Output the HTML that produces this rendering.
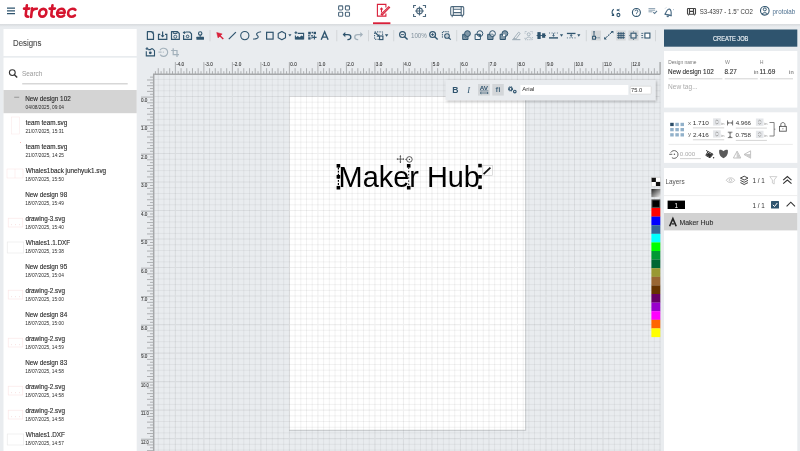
<!DOCTYPE html><html><head><meta charset="utf-8"><style>
*{margin:0;padding:0;box-sizing:border-box}
html,body{width:800px;height:451px;overflow:hidden;background:#e9ecef}
svg{position:absolute;left:0;top:0;will-change:transform}
text{font-family:"Liberation Sans",sans-serif;white-space:pre}
</style></head><body>
<svg width="800" height="451" viewBox="0 0 800 451">
<rect x="0" y="0" width="800" height="451" fill="#e9ecef"/>
<rect x="289.0" y="96.1" width="237.17770000000002" height="334.6819" fill="#c3c6c9"/>
<rect x="289.4" y="96.5" width="235.7777" height="333.2819" fill="#ffffff"/>
<defs><clipPath id="pg"><rect x="289.4" y="96.5" width="235.7777" height="333.2819"/></clipPath><clipPath id="npg"><path d="M0 0H800V451H0Z M289.4 96.5V429.7819H525.1777V96.5Z" clip-rule="evenodd"/></clipPath></defs>
<g clip-path="url(#npg)"><path d="M158.25 75.0V451M163.96 75.0V451M169.66 75.0V451M181.06 75.0V451M186.76 75.0V451M192.47 75.0V451M198.17 75.0V451M209.57 75.0V451M215.27 75.0V451M220.98 75.0V451M226.68 75.0V451M238.08 75.0V451M243.78 75.0V451M249.49 75.0V451M255.19 75.0V451M266.59 75.0V451M272.29 75.0V451M278.00 75.0V451M283.70 75.0V451M295.10 75.0V451M300.80 75.0V451M306.51 75.0V451M312.21 75.0V451M323.61 75.0V451M329.31 75.0V451M335.02 75.0V451M340.72 75.0V451M352.12 75.0V451M357.82 75.0V451M363.53 75.0V451M369.23 75.0V451M380.63 75.0V451M386.33 75.0V451M392.04 75.0V451M397.74 75.0V451M409.14 75.0V451M414.84 75.0V451M420.55 75.0V451M426.25 75.0V451M437.65 75.0V451M443.35 75.0V451M449.06 75.0V451M454.76 75.0V451M466.16 75.0V451M471.86 75.0V451M477.57 75.0V451M483.27 75.0V451M494.67 75.0V451M500.37 75.0V451M506.08 75.0V451M511.78 75.0V451M523.18 75.0V451M528.88 75.0V451M534.59 75.0V451M540.29 75.0V451M551.69 75.0V451M557.39 75.0V451M563.10 75.0V451M568.80 75.0V451M580.20 75.0V451M585.90 75.0V451M591.61 75.0V451M597.31 75.0V451M608.71 75.0V451M614.41 75.0V451M620.12 75.0V451M625.82 75.0V451M637.22 75.0V451M642.92 75.0V451M648.63 75.0V451M654.33 75.0V451M153.6 79.39H660.5M153.6 85.10H660.5M153.6 90.80H660.5M153.6 102.20H660.5M153.6 107.90H660.5M153.6 113.61H660.5M153.6 119.31H660.5M153.6 130.71H660.5M153.6 136.41H660.5M153.6 142.12H660.5M153.6 147.82H660.5M153.6 159.22H660.5M153.6 164.92H660.5M153.6 170.63H660.5M153.6 176.33H660.5M153.6 187.73H660.5M153.6 193.43H660.5M153.6 199.14H660.5M153.6 204.84H660.5M153.6 216.24H660.5M153.6 221.94H660.5M153.6 227.65H660.5M153.6 233.35H660.5M153.6 244.75H660.5M153.6 250.45H660.5M153.6 256.16H660.5M153.6 261.86H660.5M153.6 273.26H660.5M153.6 278.96H660.5M153.6 284.67H660.5M153.6 290.37H660.5M153.6 301.77H660.5M153.6 307.47H660.5M153.6 313.18H660.5M153.6 318.88H660.5M153.6 330.28H660.5M153.6 335.98H660.5M153.6 341.69H660.5M153.6 347.39H660.5M153.6 358.79H660.5M153.6 364.49H660.5M153.6 370.20H660.5M153.6 375.90H660.5M153.6 387.30H660.5M153.6 393.00H660.5M153.6 398.71H660.5M153.6 404.41H660.5M153.6 415.81H660.5M153.6 421.51H660.5M153.6 427.22H660.5M153.6 432.92H660.5M153.6 444.32H660.5M153.6 450.02H660.5" stroke="rgba(0,0,0,0.048)" stroke-width="1" fill="none"/><path d="M175.36 75.0V451M203.87 75.0V451M232.38 75.0V451M260.89 75.0V451M289.40 75.0V451M317.91 75.0V451M346.42 75.0V451M374.93 75.0V451M403.44 75.0V451M431.95 75.0V451M460.46 75.0V451M488.97 75.0V451M517.48 75.0V451M545.99 75.0V451M574.50 75.0V451M603.01 75.0V451M631.52 75.0V451M660.03 75.0V451M153.6 96.50H660.5M153.6 125.01H660.5M153.6 153.52H660.5M153.6 182.03H660.5M153.6 210.54H660.5M153.6 239.05H660.5M153.6 267.56H660.5M153.6 296.07H660.5M153.6 324.58H660.5M153.6 353.09H660.5M153.6 381.60H660.5M153.6 410.11H660.5M153.6 438.62H660.5" stroke="rgba(0,0,0,0.065)" stroke-width="1.1" fill="none"/></g>
<g clip-path="url(#pg)"><path d="M158.25 75.0V451M163.96 75.0V451M169.66 75.0V451M181.06 75.0V451M186.76 75.0V451M192.47 75.0V451M198.17 75.0V451M209.57 75.0V451M215.27 75.0V451M220.98 75.0V451M226.68 75.0V451M238.08 75.0V451M243.78 75.0V451M249.49 75.0V451M255.19 75.0V451M266.59 75.0V451M272.29 75.0V451M278.00 75.0V451M283.70 75.0V451M295.10 75.0V451M300.80 75.0V451M306.51 75.0V451M312.21 75.0V451M323.61 75.0V451M329.31 75.0V451M335.02 75.0V451M340.72 75.0V451M352.12 75.0V451M357.82 75.0V451M363.53 75.0V451M369.23 75.0V451M380.63 75.0V451M386.33 75.0V451M392.04 75.0V451M397.74 75.0V451M409.14 75.0V451M414.84 75.0V451M420.55 75.0V451M426.25 75.0V451M437.65 75.0V451M443.35 75.0V451M449.06 75.0V451M454.76 75.0V451M466.16 75.0V451M471.86 75.0V451M477.57 75.0V451M483.27 75.0V451M494.67 75.0V451M500.37 75.0V451M506.08 75.0V451M511.78 75.0V451M523.18 75.0V451M528.88 75.0V451M534.59 75.0V451M540.29 75.0V451M551.69 75.0V451M557.39 75.0V451M563.10 75.0V451M568.80 75.0V451M580.20 75.0V451M585.90 75.0V451M591.61 75.0V451M597.31 75.0V451M608.71 75.0V451M614.41 75.0V451M620.12 75.0V451M625.82 75.0V451M637.22 75.0V451M642.92 75.0V451M648.63 75.0V451M654.33 75.0V451M153.6 79.39H660.5M153.6 85.10H660.5M153.6 90.80H660.5M153.6 102.20H660.5M153.6 107.90H660.5M153.6 113.61H660.5M153.6 119.31H660.5M153.6 130.71H660.5M153.6 136.41H660.5M153.6 142.12H660.5M153.6 147.82H660.5M153.6 159.22H660.5M153.6 164.92H660.5M153.6 170.63H660.5M153.6 176.33H660.5M153.6 187.73H660.5M153.6 193.43H660.5M153.6 199.14H660.5M153.6 204.84H660.5M153.6 216.24H660.5M153.6 221.94H660.5M153.6 227.65H660.5M153.6 233.35H660.5M153.6 244.75H660.5M153.6 250.45H660.5M153.6 256.16H660.5M153.6 261.86H660.5M153.6 273.26H660.5M153.6 278.96H660.5M153.6 284.67H660.5M153.6 290.37H660.5M153.6 301.77H660.5M153.6 307.47H660.5M153.6 313.18H660.5M153.6 318.88H660.5M153.6 330.28H660.5M153.6 335.98H660.5M153.6 341.69H660.5M153.6 347.39H660.5M153.6 358.79H660.5M153.6 364.49H660.5M153.6 370.20H660.5M153.6 375.90H660.5M153.6 387.30H660.5M153.6 393.00H660.5M153.6 398.71H660.5M153.6 404.41H660.5M153.6 415.81H660.5M153.6 421.51H660.5M153.6 427.22H660.5M153.6 432.92H660.5M153.6 444.32H660.5M153.6 450.02H660.5" stroke="rgba(0,0,0,0.055)" stroke-width="1" fill="none"/><path d="M175.36 75.0V451M203.87 75.0V451M232.38 75.0V451M260.89 75.0V451M289.40 75.0V451M317.91 75.0V451M346.42 75.0V451M374.93 75.0V451M403.44 75.0V451M431.95 75.0V451M460.46 75.0V451M488.97 75.0V451M517.48 75.0V451M545.99 75.0V451M574.50 75.0V451M603.01 75.0V451M631.52 75.0V451M660.03 75.0V451M153.6 96.50H660.5M153.6 125.01H660.5M153.6 153.52H660.5M153.6 182.03H660.5M153.6 210.54H660.5M153.6 239.05H660.5M153.6 267.56H660.5M153.6 296.07H660.5M153.6 324.58H660.5M153.6 353.09H660.5M153.6 381.60H660.5M153.6 410.11H660.5M153.6 438.62H660.5" stroke="rgba(0,0,0,0.062)" stroke-width="1.1" fill="none"/></g>
<rect x="139.6" y="58" width="520.9" height="16.5" fill="#e9ecef"/>
<rect x="139.6" y="58" width="14" height="393" fill="#e9ecef"/>
<path d="M155.40 71.2V74M158.25 68.2V74M161.10 71.2V74M163.96 68.2V74M166.81 71.2V74M169.66 68.2V74M172.51 71.2V74M175.36 62V74M178.21 71.2V74M181.06 68.2V74M183.91 71.2V74M186.76 68.2V74M189.61 71.2V74M192.47 68.2V74M195.32 71.2V74M198.17 68.2V74M201.02 71.2V74M203.87 62V74M206.72 71.2V74M209.57 68.2V74M212.42 71.2V74M215.27 68.2V74M218.12 71.2V74M220.98 68.2V74M223.83 71.2V74M226.68 68.2V74M229.53 71.2V74M232.38 62V74M235.23 71.2V74M238.08 68.2V74M240.93 71.2V74M243.78 68.2V74M246.63 71.2V74M249.49 68.2V74M252.34 71.2V74M255.19 68.2V74M258.04 71.2V74M260.89 62V74M263.74 71.2V74M266.59 68.2V74M269.44 71.2V74M272.29 68.2V74M275.14 71.2V74M278.00 68.2V74M280.85 71.2V74M283.70 68.2V74M286.55 71.2V74M289.40 62V74M292.25 71.2V74M295.10 68.2V74M297.95 71.2V74M300.80 68.2V74M303.65 71.2V74M306.51 68.2V74M309.36 71.2V74M312.21 68.2V74M315.06 71.2V74M317.91 62V74M320.76 71.2V74M323.61 68.2V74M326.46 71.2V74M329.31 68.2V74M332.16 71.2V74M335.02 68.2V74M337.87 71.2V74M340.72 68.2V74M343.57 71.2V74M346.42 62V74M349.27 71.2V74M352.12 68.2V74M354.97 71.2V74M357.82 68.2V74M360.67 71.2V74M363.53 68.2V74M366.38 71.2V74M369.23 68.2V74M372.08 71.2V74M374.93 62V74M377.78 71.2V74M380.63 68.2V74M383.48 71.2V74M386.33 68.2V74M389.18 71.2V74M392.04 68.2V74M394.89 71.2V74M397.74 68.2V74M400.59 71.2V74M403.44 62V74M406.29 71.2V74M409.14 68.2V74M411.99 71.2V74M414.84 68.2V74M417.69 71.2V74M420.55 68.2V74M423.40 71.2V74M426.25 68.2V74M429.10 71.2V74M431.95 62V74M434.80 71.2V74M437.65 68.2V74M440.50 71.2V74M443.35 68.2V74M446.20 71.2V74M449.06 68.2V74M451.91 71.2V74M454.76 68.2V74M457.61 71.2V74M460.46 62V74M463.31 71.2V74M466.16 68.2V74M469.01 71.2V74M471.86 68.2V74M474.71 71.2V74M477.57 68.2V74M480.42 71.2V74M483.27 68.2V74M486.12 71.2V74M488.97 62V74M491.82 71.2V74M494.67 68.2V74M497.52 71.2V74M500.37 68.2V74M503.22 71.2V74M506.08 68.2V74M508.93 71.2V74M511.78 68.2V74M514.63 71.2V74M517.48 62V74M520.33 71.2V74M523.18 68.2V74M526.03 71.2V74M528.88 68.2V74M531.73 71.2V74M534.59 68.2V74M537.44 71.2V74M540.29 68.2V74M543.14 71.2V74M545.99 62V74M548.84 71.2V74M551.69 68.2V74M554.54 71.2V74M557.39 68.2V74M560.25 71.2V74M563.10 68.2V74M565.95 71.2V74M568.80 68.2V74M571.65 71.2V74M574.50 62V74M577.35 71.2V74M580.20 68.2V74M583.05 71.2V74M585.90 68.2V74M588.75 71.2V74M591.61 68.2V74M594.46 71.2V74M597.31 68.2V74M600.16 71.2V74M603.01 62V74M605.86 71.2V74M608.71 68.2V74M611.56 71.2V74M614.41 68.2V74M617.26 71.2V74M620.12 68.2V74M622.97 71.2V74M625.82 68.2V74M628.67 71.2V74M631.52 62V74M634.37 71.2V74M637.22 68.2V74M640.07 71.2V74M642.92 68.2V74M645.77 71.2V74M648.63 68.2V74M651.48 71.2V74M654.33 68.2V74M657.18 71.2V74M660.03 62V74M660.20 62V74M150 77.14H153M147 79.99H153M150 82.84H153M147 85.70H153M150 88.55H153M147 91.40H153M150 94.25H153M141 97.10H153M150 99.95H153M147 102.80H153M150 105.65H153M147 108.50H153M150 111.35H153M147 114.21H153M150 117.06H153M147 119.91H153M150 122.76H153M141 125.61H153M150 128.46H153M147 131.31H153M150 134.16H153M147 137.01H153M150 139.86H153M147 142.72H153M150 145.57H153M147 148.42H153M150 151.27H153M141 154.12H153M150 156.97H153M147 159.82H153M150 162.67H153M147 165.52H153M150 168.38H153M147 171.23H153M150 174.08H153M147 176.93H153M150 179.78H153M141 182.63H153M150 185.48H153M147 188.33H153M150 191.18H153M147 194.03H153M150 196.88H153M147 199.74H153M150 202.59H153M147 205.44H153M150 208.29H153M141 211.14H153M150 213.99H153M147 216.84H153M150 219.69H153M147 222.54H153M150 225.40H153M147 228.25H153M150 231.10H153M147 233.95H153M150 236.80H153M141 239.65H153M150 242.50H153M147 245.35H153M150 248.20H153M147 251.05H153M150 253.91H153M147 256.76H153M150 259.61H153M147 262.46H153M150 265.31H153M141 268.16H153M150 271.01H153M147 273.86H153M150 276.71H153M147 279.56H153M150 282.42H153M147 285.27H153M150 288.12H153M147 290.97H153M150 293.82H153M141 296.67H153M150 299.52H153M147 302.37H153M150 305.22H153M147 308.07H153M150 310.93H153M147 313.78H153M150 316.63H153M147 319.48H153M150 322.33H153M141 325.18H153M150 328.03H153M147 330.88H153M150 333.73H153M147 336.58H153M150 339.44H153M147 342.29H153M150 345.14H153M147 347.99H153M150 350.84H153M141 353.69H153M150 356.54H153M147 359.39H153M150 362.24H153M147 365.09H153M150 367.95H153M147 370.80H153M150 373.65H153M147 376.50H153M150 379.35H153M141 382.20H153M150 385.05H153M147 387.90H153M150 390.75H153M147 393.60H153M150 396.46H153M147 399.31H153M150 402.16H153M147 405.01H153M150 407.86H153M141 410.71H153M150 413.56H153M147 416.41H153M150 419.26H153M147 422.11H153M150 424.97H153M147 427.82H153M150 430.67H153M147 433.52H153M150 436.37H153M141 439.22H153M150 442.07H153M147 444.92H153M150 447.77H153M147 450.62H153" stroke="#a6a8aa" stroke-width="0.9" fill="none"/>
<path d="M153.0 74.3H660.5M153.7 74V451" stroke="#a6a8aa" stroke-width="1.5" fill="none"/>
<text x="176.26" y="65.90" font-size="4.6" fill="#3a3a3a" stroke="#3a3a3a" stroke-width="0.1">-4.0</text>
<text x="204.77" y="65.90" font-size="4.6" fill="#3a3a3a" stroke="#3a3a3a" stroke-width="0.1">-3.0</text>
<text x="233.28" y="65.90" font-size="4.6" fill="#3a3a3a" stroke="#3a3a3a" stroke-width="0.1">-2.0</text>
<text x="261.79" y="65.90" font-size="4.6" fill="#3a3a3a" stroke="#3a3a3a" stroke-width="0.1">-1.0</text>
<text x="290.30" y="65.90" font-size="4.6" fill="#3a3a3a" stroke="#3a3a3a" stroke-width="0.1">0.0</text>
<text x="318.81" y="65.90" font-size="4.6" fill="#3a3a3a" stroke="#3a3a3a" stroke-width="0.1">1.0</text>
<text x="347.32" y="65.90" font-size="4.6" fill="#3a3a3a" stroke="#3a3a3a" stroke-width="0.1">2.0</text>
<text x="375.83" y="65.90" font-size="4.6" fill="#3a3a3a" stroke="#3a3a3a" stroke-width="0.1">3.0</text>
<text x="404.34" y="65.90" font-size="4.6" fill="#3a3a3a" stroke="#3a3a3a" stroke-width="0.1">4.0</text>
<text x="432.85" y="65.90" font-size="4.6" fill="#3a3a3a" stroke="#3a3a3a" stroke-width="0.1">5.0</text>
<text x="461.36" y="65.90" font-size="4.6" fill="#3a3a3a" stroke="#3a3a3a" stroke-width="0.1">6.0</text>
<text x="489.87" y="65.90" font-size="4.6" fill="#3a3a3a" stroke="#3a3a3a" stroke-width="0.1">7.0</text>
<text x="518.38" y="65.90" font-size="4.6" fill="#3a3a3a" stroke="#3a3a3a" stroke-width="0.1">8.0</text>
<text x="546.89" y="65.90" font-size="4.6" fill="#3a3a3a" stroke="#3a3a3a" stroke-width="0.1">9.0</text>
<text x="575.40" y="65.90" font-size="4.6" fill="#3a3a3a" stroke="#3a3a3a" stroke-width="0.1" textLength="7.7" lengthAdjust="spacingAndGlyphs">10.0</text>
<text x="603.91" y="65.90" font-size="4.6" fill="#3a3a3a" stroke="#3a3a3a" stroke-width="0.1" textLength="7.7" lengthAdjust="spacingAndGlyphs">11.0</text>
<text x="632.42" y="65.90" font-size="4.6" fill="#3a3a3a" stroke="#3a3a3a" stroke-width="0.1" textLength="7.7" lengthAdjust="spacingAndGlyphs">12.0</text>
<text x="141.00" y="101.60" font-size="4.6" fill="#3a3a3a" stroke="#3a3a3a" stroke-width="0.1">0.0</text>
<text x="141.00" y="130.11" font-size="4.6" fill="#3a3a3a" stroke="#3a3a3a" stroke-width="0.1">1.0</text>
<text x="141.00" y="158.62" font-size="4.6" fill="#3a3a3a" stroke="#3a3a3a" stroke-width="0.1">2.0</text>
<text x="141.00" y="187.13" font-size="4.6" fill="#3a3a3a" stroke="#3a3a3a" stroke-width="0.1">3.0</text>
<text x="141.00" y="215.64" font-size="4.6" fill="#3a3a3a" stroke="#3a3a3a" stroke-width="0.1">4.0</text>
<text x="141.00" y="244.15" font-size="4.6" fill="#3a3a3a" stroke="#3a3a3a" stroke-width="0.1">5.0</text>
<text x="141.00" y="272.66" font-size="4.6" fill="#3a3a3a" stroke="#3a3a3a" stroke-width="0.1">6.0</text>
<text x="141.00" y="301.17" font-size="4.6" fill="#3a3a3a" stroke="#3a3a3a" stroke-width="0.1">7.0</text>
<text x="141.00" y="329.68" font-size="4.6" fill="#3a3a3a" stroke="#3a3a3a" stroke-width="0.1">8.0</text>
<text x="141.00" y="358.19" font-size="4.6" fill="#3a3a3a" stroke="#3a3a3a" stroke-width="0.1">9.0</text>
<text x="141.00" y="386.70" font-size="4.6" fill="#3a3a3a" stroke="#3a3a3a" stroke-width="0.1" textLength="7.7" lengthAdjust="spacingAndGlyphs">10.0</text>
<text x="141.00" y="415.21" font-size="4.6" fill="#3a3a3a" stroke="#3a3a3a" stroke-width="0.1" textLength="7.7" lengthAdjust="spacingAndGlyphs">11.0</text>
<text x="141.00" y="443.72" font-size="4.6" fill="#3a3a3a" stroke="#3a3a3a" stroke-width="0.1" textLength="7.7" lengthAdjust="spacingAndGlyphs">12.0</text>
<rect x="0" y="0" width="800" height="24.1" fill="#fff"/>
<defs><linearGradient id="hs" x1="0" y1="0" x2="0" y2="1"><stop offset="0" stop-color="#d6d9dc"/><stop offset="1" stop-color="#e9ecef"/></linearGradient></defs>
<rect x="0" y="24.1" width="800" height="2.8" fill="url(#hs)"/>
<path d="M7 8.2H15M7 10.9H15M7 13.7H15" stroke="#2f546e" stroke-width="1.3"/>
<g transform="translate(0,17) skewX(-6.5) translate(0,-17)" stroke="#d5142e" stroke-width="2.6" stroke-linecap="round"><path d="M25.5 5.2V14.6C25.5 16.3 26.400000000000002 16.7 28.200000000000003 16.7" fill="none"/><path d="M23.1 8.6H28.3"/><path d="M31.1 8.4V16.9M31.1 12.6C31.3 9.8 33.1 8.6 35.9 8.7" fill="none"/><ellipse cx="42.3" cy="12.75" rx="3.55" ry="3.9" fill="none"/><path d="M51.1 5.2V14.6C51.1 16.3 52.0 16.7 53.800000000000004 16.7" fill="none"/><path d="M48.7 8.6H53.900000000000006"/><g transform="translate(-0.7,0)"><path d="M64.9 12.7H57.6M64.9 12.7C64.9 10.4 63.2 8.8 61.2 8.8C59 8.8 57.4 10.6 57.4 12.75C57.4 14.9 59 16.7 61.4 16.7C62.6 16.7 63.7 16.3 64.6 15.5" fill="none"/></g><g transform="translate(-1,0)"><path d="M75.6 9.9C74.9 9.2 73.8 8.8 72.6 8.8C70.4 8.8 68.6 10.6 68.6 12.75C68.6 14.9 70.4 16.7 72.6 16.7C73.8 16.7 74.9 16.3 75.7 15.5" fill="none"/></g></g>
<g fill="none" stroke="#4d687d" stroke-width="1.1"><rect x="338.6" y="5.9" width="4.1" height="4.1" rx="0.9"/><rect x="345.4" y="5.9" width="4.1" height="4.1" rx="0.9"/><rect x="338.6" y="12.2" width="4.1" height="4.1" rx="0.9"/><rect x="345.4" y="12.2" width="4.1" height="4.1" rx="0.9"/></g>
<g fill="none" stroke="#d9203a" stroke-width="1.1"><path d="M385.9 7.5V4.4H377.4V16.1H385.9V13.5"/><path d="M381.2 14.2L388.7 6.7L389.6 7.6L382.1 15.1Z"/><path d="M381.5 8V12.5M380.2 9.5L381.5 8L382.8 9.5" /></g>
<rect x="373" y="22.3" width="17.4" height="1.85" fill="#d9203a"/>
<g fill="none" stroke="#4d687d" stroke-width="1.1"><path d="M413.6 8V5.5H416M422.8 5.5H425.5V8M425.5 14V16.5H422.8M416 16.5H413.6V14"/><circle cx="419.5" cy="11" r="2.9"/><path d="M419.5 6.6V15.4M415.1 11H423.9"/></g>
<g fill="none" stroke="#4d687d" stroke-width="1.1"><rect x="450.7" y="6.6" width="13" height="8.8" rx="1.2"/><path d="M453.3 6.6V15.4M461.2 6.6V15.4M453.3 9.3H461.2M453.3 12.6H461.2M452.2 15.6V17.2M462.2 15.6V17.2"/></g>
<g fill="none" stroke="#2f546e" stroke-width="1.1"><path d="M613.8 9.3C611.6 10.6 611.6 13.2 613.1 14.8"/><path d="M611.8 15.4L613.6 15.5L613.5 13.7" /></g>
<path d="M617.3 9.2V11M617.5 10.1L619.6 9.2M617.5 10.1L619.6 11" stroke="#2f546e" stroke-width="0.9" fill="none"/>
<ellipse cx="618.4" cy="15" rx="1.5" ry="1.6" fill="none" stroke="#2f546e" stroke-width="1.1"/>
<circle cx="636.4" cy="12.5" r="4" fill="none" stroke="#2f546e" stroke-width="1.1"/>
<path d="M635 11.2C635 9.6 637.9 9.6 637.9 11.2C637.9 12.3 636.5 12.4 636.5 13.6V14.1M636.5 15.3V15.6" stroke="#2f546e" stroke-width="0.9" fill="none"/>
<path d="M648.5 8.6H655.2M648.5 10.2H655.2M648.5 11.8H652.5" stroke="#8da2b2" stroke-width="1"/>
<path d="M653.3 12.2L654.6 13.5L657 10.8" stroke="#5d7a90" stroke-width="1.1" fill="none"/>
<g transform="rotate(13 668.8 12)" fill="none" stroke="#4a6b84" stroke-width="1.15" stroke-linejoin="round"><path d="M665.8 15C666.2 12.4 666.2 9.6 668.8 8.9C671.4 9.6 671.4 12.4 671.8 15Z"/><path d="M665.2 15H672.4"/><path d="M667.9 16.3C668.2 16.9 669.4 16.9 669.7 16.3"/></g><path d="M673 9.2L673.9 10M665.3 8.4L666.1 7.6" stroke="#7d96a8" stroke-width="0.7"/>
<g fill="none" stroke="#444" stroke-width="1.1"><rect x="687.5" y="8.5" width="8" height="5.8" rx="0.6"/><path d="M689.5 8.5V14.3M693.5 8.5V14.3M689.5 11.4H693.5"/></g><path d="M688.5 14.8V15.5M694.5 14.8V15.5" stroke="#444" stroke-width="0.9"/>
<text x="699.70" y="14.10" font-size="7.1" fill="#3a3a3a" textLength="53.20" lengthAdjust="spacingAndGlyphs" >S3-4397 - 1.5&quot; CO2</text>
<circle cx="764.8" cy="10.8" r="4.3" fill="none" stroke="#2f546e" stroke-width="1.1"/><circle cx="764.8" cy="9.4" r="1.5" fill="none" stroke="#2f546e" stroke-width="1"/><path d="M762.2 14.1C762.5 12.2 767.1 12.2 767.4 14.1" fill="none" stroke="#2f546e" stroke-width="1"/>
<text x="772.62" y="13.80" font-size="7" fill="#4e7190" textLength="22.58" lengthAdjust="spacingAndGlyphs" >protolab</text>
<rect x="3.5" y="29" width="133.2" height="27" fill="#fff"/>
<text x="13.07" y="46.40" font-size="8.4" fill="#4a4a4a" textLength="28.26" lengthAdjust="spacingAndGlyphs" stroke="#4a4a4a" stroke-width="0.1">Designs</text>
<rect x="3.5" y="57.7" width="133.2" height="393.3" fill="#fff"/>
<circle cx="12.3" cy="72.6" r="2.9" fill="none" stroke="#333" stroke-width="1.1"/><path d="M14.4 74.7L17.2 77.5" stroke="#333" stroke-width="1.4"/>
<text x="21.88" y="76.30" font-size="7" fill="#999" textLength="20.57" lengthAdjust="spacingAndGlyphs" >Search</text>
<rect x="22.2" y="83.4" width="105.5" height="0.9" fill="#bdbdbd"/>
<rect x="3.5" y="90" width="133.2" height="23.2" fill="#d4d4d4"/>
<rect x="14.2" y="96.8" width="5" height="0.8" fill="#888"/>
<text x="25.19" y="101.10" font-size="7.4" fill="#2b2b2b" textLength="45.53" lengthAdjust="spacingAndGlyphs" stroke="#2b2b2b" stroke-width="0.14">New design 102</text>
<text x="25.51" y="109.10" font-size="5.6" fill="#2a2a2a" textLength="38.50" lengthAdjust="spacingAndGlyphs" >04/08/2025, 09:04</text>
<text x="25.64" y="125.10" font-size="7.4" fill="#2b2b2b" textLength="41.64" lengthAdjust="spacingAndGlyphs" stroke="#2b2b2b" stroke-width="0.14">team team.svg</text>
<text x="25.46" y="133.10" font-size="5.6" fill="#2a2a2a" textLength="38.50" lengthAdjust="spacingAndGlyphs" >21/07/2025, 15:31</text>
<rect x="11.5" y="117" width="8" height="17" fill="none" stroke="#f9e6e6" stroke-width="0.5"/>
<text x="25.64" y="149.10" font-size="7.4" fill="#2b2b2b" textLength="41.64" lengthAdjust="spacingAndGlyphs" stroke="#2b2b2b" stroke-width="0.14">team team.svg</text>
<text x="25.46" y="157.10" font-size="5.6" fill="#2a2a2a" textLength="38.50" lengthAdjust="spacingAndGlyphs" >21/07/2025, 14:25</text>
<rect x="20" y="142" width="1" height="1" fill="#f2b8b8"/>
<text x="25.70" y="173.10" font-size="7.4" fill="#2b2b2b" textLength="80.47" lengthAdjust="spacingAndGlyphs" stroke="#2b2b2b" stroke-width="0.14">Whales1back junehyuk1.svg</text>
<text x="25.32" y="181.10" font-size="5.6" fill="#2a2a2a" textLength="38.50" lengthAdjust="spacingAndGlyphs" >18/07/2025, 15:50</text>
<rect x="7" y="169" width="16" height="9" fill="none" stroke="#f9e2e2" stroke-width="0.5"/><path d="M15 169V178" stroke="#f9e2e2" stroke-width="0.5"/>
<text x="25.19" y="197.10" font-size="7.4" fill="#2b2b2b" textLength="42.00" lengthAdjust="spacingAndGlyphs" stroke="#2b2b2b" stroke-width="0.14">New design 98</text>
<text x="25.32" y="205.10" font-size="5.6" fill="#2a2a2a" textLength="38.50" lengthAdjust="spacingAndGlyphs" >18/07/2025, 15:49</text>
<text x="25.45" y="221.10" font-size="7.4" fill="#2b2b2b" textLength="39.52" lengthAdjust="spacingAndGlyphs" stroke="#2b2b2b" stroke-width="0.14">drawing-3.svg</text>
<text x="25.32" y="229.10" font-size="5.6" fill="#2a2a2a" textLength="38.50" lengthAdjust="spacingAndGlyphs" >18/07/2025, 15:40</text>
<rect x="8.2" y="218.2" width="14.6" height="8.8" fill="none" stroke="#fae3e3" stroke-width="0.6"/><path d="M11 224.6H12M15 224.6H16M19 224.6H20" stroke="#f0c8c8" stroke-width="0.5"/>
<text x="25.70" y="245.10" font-size="7.4" fill="#2b2b2b" textLength="44.46" lengthAdjust="spacingAndGlyphs" stroke="#2b2b2b" stroke-width="0.14">Whales1.1.DXF</text>
<text x="25.32" y="253.10" font-size="5.6" fill="#2a2a2a" textLength="38.50" lengthAdjust="spacingAndGlyphs" >18/07/2025, 15:38</text>
<rect x="7.2" y="242" width="16.5" height="11" fill="none" stroke="#e6e6e6" stroke-width="0.6"/>
<text x="25.19" y="269.10" font-size="7.4" fill="#2b2b2b" textLength="42.00" lengthAdjust="spacingAndGlyphs" stroke="#2b2b2b" stroke-width="0.14">New design 95</text>
<text x="25.32" y="277.10" font-size="5.6" fill="#2a2a2a" textLength="38.50" lengthAdjust="spacingAndGlyphs" >18/07/2025, 15:04</text>
<text x="25.45" y="293.10" font-size="7.4" fill="#2b2b2b" textLength="39.52" lengthAdjust="spacingAndGlyphs" stroke="#2b2b2b" stroke-width="0.14">drawing-2.svg</text>
<text x="25.32" y="301.10" font-size="5.6" fill="#2a2a2a" textLength="38.50" lengthAdjust="spacingAndGlyphs" >18/07/2025, 15:00</text>
<rect x="8.2" y="290.2" width="14.6" height="8.8" fill="none" stroke="#fae3e3" stroke-width="0.6"/><path d="M11 296.6H12M15 296.6H16M19 296.6H20" stroke="#f0c8c8" stroke-width="0.5"/>
<text x="25.19" y="317.10" font-size="7.4" fill="#2b2b2b" textLength="42.00" lengthAdjust="spacingAndGlyphs" stroke="#2b2b2b" stroke-width="0.14">New design 84</text>
<text x="25.32" y="325.10" font-size="5.6" fill="#2a2a2a" textLength="38.50" lengthAdjust="spacingAndGlyphs" >18/07/2025, 15:00</text>
<text x="25.45" y="341.10" font-size="7.4" fill="#2b2b2b" textLength="39.52" lengthAdjust="spacingAndGlyphs" stroke="#2b2b2b" stroke-width="0.14">drawing-2.svg</text>
<text x="25.32" y="349.10" font-size="5.6" fill="#2a2a2a" textLength="38.50" lengthAdjust="spacingAndGlyphs" >18/07/2025, 14:59</text>
<rect x="8.2" y="338.2" width="14.6" height="8.8" fill="none" stroke="#fae3e3" stroke-width="0.6"/><path d="M11 344.6H12M15 344.6H16M19 344.6H20" stroke="#f0c8c8" stroke-width="0.5"/>
<text x="25.19" y="365.10" font-size="7.4" fill="#2b2b2b" textLength="42.00" lengthAdjust="spacingAndGlyphs" stroke="#2b2b2b" stroke-width="0.14">New design 83</text>
<text x="25.32" y="373.10" font-size="5.6" fill="#2a2a2a" textLength="38.50" lengthAdjust="spacingAndGlyphs" >18/07/2025, 14:58</text>
<text x="25.45" y="389.10" font-size="7.4" fill="#2b2b2b" textLength="39.52" lengthAdjust="spacingAndGlyphs" stroke="#2b2b2b" stroke-width="0.14">drawing-2.svg</text>
<text x="25.32" y="397.10" font-size="5.6" fill="#2a2a2a" textLength="38.50" lengthAdjust="spacingAndGlyphs" >18/07/2025, 14:58</text>
<rect x="8.2" y="386.2" width="14.6" height="8.8" fill="none" stroke="#fae3e3" stroke-width="0.6"/><path d="M11 392.6H12M15 392.6H16M19 392.6H20" stroke="#f0c8c8" stroke-width="0.5"/>
<text x="25.45" y="413.10" font-size="7.4" fill="#2b2b2b" textLength="39.52" lengthAdjust="spacingAndGlyphs" stroke="#2b2b2b" stroke-width="0.14">drawing-2.svg</text>
<text x="25.32" y="421.10" font-size="5.6" fill="#2a2a2a" textLength="38.50" lengthAdjust="spacingAndGlyphs" >18/07/2025, 14:58</text>
<rect x="8.2" y="410.2" width="14.6" height="8.8" fill="none" stroke="#fae3e3" stroke-width="0.6"/><path d="M11 416.6H12M15 416.6H16M19 416.6H20" stroke="#f0c8c8" stroke-width="0.5"/>
<text x="25.70" y="437.10" font-size="7.4" fill="#2b2b2b" textLength="39.17" lengthAdjust="spacingAndGlyphs" stroke="#2b2b2b" stroke-width="0.14">Whales1.DXF</text>
<text x="25.32" y="445.10" font-size="5.6" fill="#2a2a2a" textLength="38.50" lengthAdjust="spacingAndGlyphs" >18/07/2025, 14:57</text>
<rect x="7.2" y="434" width="16.5" height="11" fill="none" stroke="#e6e6e6" stroke-width="0.6"/>
<rect x="209.5" y="30" width="1" height="11.3" fill="#d3d6d9"/>
<rect x="336.3" y="30" width="1" height="11.3" fill="#d3d6d9"/>
<rect x="368.0" y="30" width="1" height="11.3" fill="#d3d6d9"/>
<rect x="393.2" y="30" width="1" height="11.3" fill="#d3d6d9"/>
<rect x="456.2" y="30" width="1" height="11.3" fill="#d3d6d9"/>
<rect x="585.8" y="30" width="1" height="11.3" fill="#d3d6d9"/>
<rect x="655.0" y="30" width="1" height="11.3" fill="#d3d6d9"/>
<path d="M147.4 31.7H151.4L153.5 33.8V39.4H147.4Z" fill="none" stroke="#2f546e" stroke-width="1.2" stroke-linejoin="round"/><path d="M151.2 31.6L153.6 34V31.6Z" fill="#2f546e"/><path d="M160.3 34.4H158.5V39.4H166.8V34.4H165" fill="none" stroke="#2f546e" stroke-width="1.2"/><path d="M162.6 31.6V37" stroke="#2f546e" stroke-width="1.2"/><path d="M160.6 35.2L162.6 37.6L164.6 35.2Z" fill="#2f546e"/><path d="M171.5 31.7H177.5L179.3 33.5V39.4H171.5Z" fill="none" stroke="#2f546e" stroke-width="1.2" stroke-linejoin="round"/><path d="M173.3 31.8V33.5H177.1V31.8" fill="none" stroke="#2f546e" stroke-width="0.9"/><circle cx="175.3" cy="36.7" r="1.5" fill="none" stroke="#2f546e" stroke-width="0.9"/><path d="M185.5 32H189.7L191.5 33.8V39.4H183.6V35" fill="none" stroke="#2f546e" stroke-width="1.2" stroke-linejoin="round"/><circle cx="187.6" cy="36.4" r="1.3" fill="none" stroke="#2f546e" stroke-width="1"/><path d="M184.3 31.2V34M182.9 32.6H185.7" stroke="#2f546e" stroke-width="1"/><circle cx="200.2" cy="33.4" r="1.7" fill="none" stroke="#2f546e" stroke-width="1.1"/><path d="M200.2 35.2V36.8" stroke="#2f546e" stroke-width="1.2"/><rect x="196.4" y="36.7" width="7.6" height="3.1" rx="0.5" fill="#2f546e"/><path d="M216.7 32.5L222.2 33.9L218.1 38Z" fill="#d9203a" stroke="#d9203a" stroke-width="0.5" stroke-linejoin="round"/><path d="M219.6 35.4L223.3 38.9" stroke="#d9203a" stroke-width="1.4"/><path d="M228.8 39.1L235.9 32.1" stroke="#2f546e" stroke-width="1.2"/><circle cx="244.8" cy="35.6" r="4.1" fill="none" stroke="#2f546e" stroke-width="1.1"/><path d="M253.2 39.1C256 39 258.4 38.2 258.2 36.8C258 35.6 256 35.3 256.8 33.6C257.4 32.4 259.5 31.9 261.1 31.7" fill="none" stroke="#2f546e" stroke-width="1.1"/><rect x="266.6" y="32.3" width="6.5" height="6.8" fill="none" stroke="#2f546e" stroke-width="1.2"/><path d="M281.85 31.6L285.5 33.6V37.8L281.85 39.8L278.2 37.8V33.6Z" fill="none" stroke="#2f546e" stroke-width="1.1" stroke-linejoin="round"/><path d="M288.3 34.2H291.5L289.9 36.6Z" fill="#2f546e"/><path d="M297.7 33.4H303.6V39H295.4V35.6" fill="none" stroke="#2f546e" stroke-width="1.1"/><path d="M295.6 37.4L297.8 36.1L299.4 37.3L301.6 35.4L303.6 36.8V39.2H295.6Z" fill="#2f546e"/><path d="M295.9 31.3V34.1M294.5 32.7H297.3" stroke="#2f546e" stroke-width="1"/><g fill="#2f546e"><rect x="308.2" y="31.8" width="2.6" height="2.6"/><rect x="311.6" y="31.8" width="1.5" height="1.5"/><rect x="313.6" y="31.8" width="2.4" height="2.4"/><rect x="308.2" y="35" width="1.5" height="1.5"/><rect x="310.8" y="35.2" width="2.2" height="1.2"/><rect x="308.2" y="37.2" width="2.4" height="2.4"/><rect x="311.2" y="37.4" width="1.2" height="1.2"/></g><path d="M314.4 35.2V39.6M312.2 37.4H316.6" stroke="#2f546e" stroke-width="1.1"/><path d="M321.2 39.8L324.65 31.8L328.1 39.8M322.4 37.1H326.9" fill="none" stroke="#2f546e" stroke-width="1.4"/><path d="M343.8 34.6H348C351.8 34.6 351.8 39.6 348 39.6H347.4" fill="none" stroke="#2f546e" stroke-width="1.3"/><path d="M342.6 34.6L345.3 31.9V37.3Z" fill="#2f546e"/><path d="M361.8 34.6H357.6C353.8 34.6 353.8 39.6 357.6 39.6H358.2" fill="none" stroke="#a3b1bb" stroke-width="1.3"/><path d="M363 34.6L360.3 31.9V37.3Z" fill="#a3b1bb"/><path d="M374.6 31.9H382.6V39.3H374.6Z" fill="none" stroke="#2f546e" stroke-width="1" stroke-dasharray="1.3 1.1"/><path d="M375.2 32.5L378.4 35.7" stroke="#2f546e" stroke-width="1.2"/><path d="M379.4 36.7V33.8L376.5 36.7Z" fill="#2f546e"/><rect x="379.6" y="36" width="3.3" height="3.6" fill="#e9ecef" stroke="#2f546e" stroke-width="1.1"/><path d="M384.9 34.2H388.3L386.6 36.7Z" fill="#2f546e"/><circle cx="402.5" cy="34.6" r="2.9" fill="none" stroke="#2f546e" stroke-width="1.2"/><path d="M404.6 36.7L407.6 39.5" stroke="#2f546e" stroke-width="1.4"/><path d="M401 34.6H404" stroke="#2f546e" stroke-width="0.9"/><circle cx="432.6" cy="34.6" r="2.9" fill="none" stroke="#2f546e" stroke-width="1.2"/><path d="M434.7 36.7L437.7 39.5" stroke="#2f546e" stroke-width="1.4"/><path d="M431.1 34.6H434.1M432.6 33.1V36.1" stroke="#2f546e" stroke-width="0.9"/><path d="M442.4 37.6V31.7H448.6V33.2" fill="none" stroke="#2f546e" stroke-width="1" stroke-dasharray="1.3 0.9"/><circle cx="447" cy="36" r="2.3" fill="none" stroke="#2f546e" stroke-width="1.1"/><path d="M448.6 37.6L450.8 39.6" stroke="#2f546e" stroke-width="1.2"/><circle cx="447" cy="36" r="0.5" fill="#2f546e"/><path d="M462.7 34.3H468V39.5H462.7Z" fill="#8198a8" stroke="#2f546e" stroke-width="1"/><circle cx="467.5" cy="33.6" r="2.9" fill="#8198a8" stroke="#2f546e" stroke-width="1"/><path d="M463.3 34.8L466.6 38.4" stroke="#2f546e" stroke-width="0.6"/><path d="M475.09999999999997 34.3H480.4V39.5H475.09999999999997Z" fill="#f2f4f6" stroke="#2f546e" stroke-width="1"/><circle cx="479.9" cy="33.6" r="2.9" fill="none" stroke="#2f546e" stroke-width="1"/><path d="M477.2 34.4H480.29999999999995V36.4Z" fill="#2f546e"/><path d="M487.7 34.3H493V39.5H487.7Z" fill="#8198a8" stroke="#2f546e" stroke-width="1"/><circle cx="492.5" cy="33.6" r="2.9" fill="none" stroke="#2f546e" stroke-width="1"/><path d="M489.9 34.5H492.8V36.3Z" fill="#eef1f3"/><path d="M500.09999999999997 34.3H505.4V39.5H500.09999999999997Z" fill="#8198a8" stroke="#2f546e" stroke-width="1"/><circle cx="504.9" cy="33.6" r="2.9" fill="#8198a8" stroke="#2f546e" stroke-width="1"/><circle cx="504.0" cy="35.4" r="1.1" fill="#fff"/><path d="M512.2 39.6H520.4" stroke="#a3b1bb" stroke-width="1.2"/><path d="M513.4 38.8L518.6 32.2L520.2 33.4L515.6 39.4Z" fill="none" stroke="#a3b1bb" stroke-width="1"/><path d="M513.2 39.2L516.5 39.2L514.4 37.2Z" fill="#a3b1bb"/><g fill="none" stroke="#a3b1bb" stroke-width="0.9"><path d="M525 33.6V31.5H527M530.5 31.5H532.4V33.6M532.4 37V39.7H525V37" stroke-dasharray="1 0.8"/><circle cx="528.7" cy="34.3" r="1.5"/><path d="M526.2 38.8C526.4 36.6 531 36.6 531.2 38.8"/></g><rect x="537.4" y="32.1" width="3.3" height="6.9" fill="#2f546e"/><rect x="542.1" y="33.3" width="3.1" height="4.5" fill="#2f546e"/><path d="M536.6 35.5H546" stroke="#2f546e" stroke-width="0.9"/><rect x="549" y="37.2" width="9" height="1.4" fill="#2f546e"/><path d="M549 33H550M551.6 33H552.6M554.3 33H555.3M556.9 33H557.9" stroke="#2f546e" stroke-width="0.8"/><path d="M553.5 33.2V35.5" stroke="#2f546e" stroke-width="0.8"/><path d="M552 35.2H555L553.5 36.8Z" fill="#2f546e"/><path d="M559.9 34.2H563.1L561.5 36.7Z" fill="#2f546e"/><rect x="566.9" y="32.8" width="8.6" height="1.3" fill="#2f546e"/><path d="M566.9 37.9H567.9M569.4 37.9H570.4M572 37.9H573M574.5 37.9H575.5" stroke="#2f546e" stroke-width="0.8"/><path d="M571.2 35.5V37.6" stroke="#2f546e" stroke-width="0.8"/><path d="M569.7 35.7H572.7L571.2 34.1Z" fill="#2f546e"/><path d="M577.2 34.2H580.4L578.8 36.7Z" fill="#2f546e"/><rect x="591.2" y="30.6" width="9.8" height="9.9" fill="#d6d8da"/><path d="M594 31.6V36.2" stroke="#2f546e" stroke-width="0.9"/><rect x="592.6" y="36.3" width="2.9" height="2.9" fill="none" stroke="#2f546e" stroke-width="1"/><path d="M596.3 37.8H597.3M598.5 37.8H599.5" stroke="#2f546e" stroke-width="0.9"/><rect x="593.4" y="31.2" width="1.3" height="1" fill="#2f546e"/><path d="M604.6 39L607.6 36M609.6 34.2L612.4 31.6" stroke="#2f546e" stroke-width="1"/><path d="M604.2 36.8V39.4H606.8Z M610.8 31H613.4V33.6Z" fill="#2f546e"/><rect x="608" y="34.6" width="1.2" height="1.2" fill="#2f546e"/><rect x="616.2" y="30.5" width="9.5" height="10" fill="#d6d8da"/><path d="M618.8 32V39M621 32V39M623.2 32V39M617.2 33.6H624.8M617.2 35.6H624.8M617.2 37.6H624.8" stroke="#2f546e" stroke-width="0.9"/><rect x="628.4" y="30.5" width="10.2" height="10" fill="#d6d8da"/><rect x="631" y="33.2" width="5" height="4.8" fill="#e3e5e7" stroke="#2f546e" stroke-width="1.1"/><path d="M633.5 31.2L632.7 32.2H634.3Z M633.5 39.9L632.7 38.9H634.3Z M629.2 35.6L630.2 34.8V36.4Z M637.8 35.6L636.8 34.8V36.4Z" fill="#2f546e"/><rect x="644.9" y="33.1" width="5" height="4.9" fill="#fff" stroke="#2f546e" stroke-width="1.1"/><path d="M641.3 33.4H643.3M641.3 35.5H643M641.3 37.7H643.3" stroke="#2f546e" stroke-width="0.8"/><path d="M148.2 49.6H150.6L151.3 48.8H152.6L154.5 50.7V55.9H146.3V51.2" fill="none" stroke="#2f546e" stroke-width="1.1"/><circle cx="150.3" cy="52.8" r="1.4" fill="#2f546e"/><path d="M147 47.3V50.1M145.6 48.7H148.4" stroke="#2f546e" stroke-width="1.1"/><path d="M160 50.3A4.1 4.1 0 1 1 160.2 54.6" fill="none" stroke="#a3b1bb" stroke-width="1.1"/><path d="M158.4 52.1H161.6" stroke="#a3b1bb" stroke-width="1"/><circle cx="163.3" cy="52.1" r="0.6" fill="#a3b1bb"/><path d="M173.2 48.3V54.6H179M171.1 50.5H177V56.9" fill="none" stroke="#a3b1bb" stroke-width="1.2"/>
<text x="410.90" y="38.30" font-size="6.4" fill="#7f8f9b" textLength="16.04" lengthAdjust="spacingAndGlyphs" >100%</text>
<defs><filter id="sh" x="-10%" y="-60%" width="120%" height="230%"><feDropShadow dx="0.8" dy="1" stdDeviation="1.8" flood-color="#000" flood-opacity="0.32"/></filter></defs>
<rect x="445.6" y="80" width="210" height="20.2" fill="#e9ecef" filter="url(#sh)"/>
<rect x="478" y="84" width="11.8" height="11.6" fill="#d3d6d9"/><rect x="492.3" y="84" width="11.5" height="11.6" fill="#d3d6d9"/>
<text x="452.3" y="93.1" font-size="8.6" font-weight="bold" fill="#2f546e" font-family="Liberation Sans">B</text>
<text x="467.2" y="93.1" font-size="8.4" font-style="italic" fill="#2f546e" style="font-family:'Liberation Serif'">I</text>
<text x="479.7" y="90.2" font-size="5.6" font-weight="bold" fill="#2f546e" textLength="8.3" lengthAdjust="spacingAndGlyphs">AV</text><path d="M479.8 90.9H488.4" stroke="#2f546e" stroke-width="0.6"/><path d="M480.2 93H488.2M480.2 93L481.4 92.2M480.2 93L481.4 93.8M488.2 93L487 92.2M488.2 93L487 93.8" stroke="#2f546e" stroke-width="0.7" fill="none"/>
<text x="495.5" y="92" font-size="6.5" fill="#2f546e" textLength="5" lengthAdjust="spacingAndGlyphs">fi</text>
<circle cx="510.5" cy="88.9" r="1.9" fill="none" stroke="#2f546e" stroke-width="1.4" stroke-dasharray="0.9 0.5"/><circle cx="510.5" cy="88.9" r="1.4" fill="none" stroke="#2f546e" stroke-width="1"/><circle cx="514.8" cy="91.6" r="1.3" fill="none" stroke="#2f546e" stroke-width="1.1"/>
<rect x="520.4" y="85" width="107.9" height="9.9" fill="#fff"/>
<text x="522.30" y="91.30" font-size="6" fill="#333" textLength="12.06" lengthAdjust="spacingAndGlyphs" >Arial</text>
<rect x="630.2" y="86.2" width="21" height="7.9" rx="0.8" fill="#fff" stroke="#d7d7d7" stroke-width="0.7"/>
<text x="631.02" y="92.30" font-size="6.2" fill="#333" textLength="11.09" lengthAdjust="spacingAndGlyphs" >75.0</text>
<text x="338.59" y="186.90" font-size="29.9" fill="#000" textLength="141.33" lengthAdjust="spacingAndGlyphs" >Maker Hub</text>
<path d="M338.4 167.6V186" stroke="#000" stroke-width="1.2" stroke-dasharray="1.8 1.3"/>
<rect x="336.59999999999997" y="164.0" width="3.6" height="3.6" fill="#000"/>
<rect x="336.59999999999997" y="175.0" width="3.6" height="3.6" fill="#000"/>
<rect x="336.59999999999997" y="185.89999999999998" width="3.6" height="3.6" fill="#000"/>
<rect x="406.9" y="164.0" width="3.6" height="3.6" fill="#000"/>
<rect x="406.9" y="185.89999999999998" width="3.6" height="3.6" fill="#000"/>
<rect x="478.2" y="163.79999999999998" width="3.6" height="3.6" fill="#000"/>
<rect x="478.2" y="175.0" width="3.6" height="3.6" fill="#000"/>
<rect x="478.2" y="185.5" width="3.6" height="3.6" fill="#000"/>
<path d="M408.7 167.6V186" stroke="#000" stroke-width="0.9" stroke-dasharray="1.4 1.8"/>
<path d="M400.4 155.6V162.6M396.9 159.1H403.9" stroke="#333" stroke-width="0.7"/><path d="M400.4 155.3L399.5 156.4H401.3Z M400.4 162.9L399.5 161.8H401.3Z M396.6 159.1L397.7 158.2V160Z M404.2 159.1L403.1 158.2V160Z" fill="#333"/>
<circle cx="409.4" cy="159.4" r="2.8" fill="none" stroke="#333" stroke-width="0.8"/><circle cx="409.4" cy="159.4" r="0.6" fill="#333"/><path d="M405.3 159.4H406.6" stroke="#333" stroke-width="0.8"/>
<rect x="482.3" y="165.3" width="10" height="10.2" fill="none" stroke="#c9c9c9" stroke-width="0.6"/><path d="M483.6 174.2L490.4 167.6" stroke="#111" stroke-width="1.7"/>
<rect x="651.4" y="177.6" width="8.9" height="8.6" fill="#fff" stroke="#c8c8c8" stroke-width="0.5"/><rect x="651.6" y="177.8" width="4.3" height="4.2" fill="#111"/><rect x="655.9" y="181.9" width="4.3" height="4.1" fill="#111"/>
<defs><linearGradient id="gr" x1="0" y1="0" x2="1" y2="1"><stop offset="0" stop-color="#222"/><stop offset="1" stop-color="#eee"/></linearGradient></defs>
<rect x="651.4" y="189" width="9" height="8.2" fill="url(#gr)"/>
<rect x="651.4" y="199.4" width="8.9" height="8.6" fill="#4a4a4a"/><rect x="652.5" y="200.5" width="6.7" height="6.4" fill="#000"/>
<rect x="651.4" y="208.00" width="8.9" height="8.7" fill="#ff0000"/>
<rect x="651.4" y="216.60" width="8.9" height="8.7" fill="#0000ff"/>
<rect x="651.4" y="225.20" width="8.9" height="8.7" fill="#336699"/>
<rect x="651.4" y="233.80" width="8.9" height="8.7" fill="#00ffff"/>
<rect x="651.4" y="242.40" width="8.9" height="8.7" fill="#00ff00"/>
<rect x="651.4" y="251.00" width="8.9" height="8.7" fill="#009933"/>
<rect x="651.4" y="259.60" width="8.9" height="8.7" fill="#006633"/>
<rect x="651.4" y="268.20" width="8.9" height="8.7" fill="#999933"/>
<rect x="651.4" y="276.80" width="8.9" height="8.7" fill="#996633"/>
<rect x="651.4" y="285.40" width="8.9" height="8.7" fill="#663300"/>
<rect x="651.4" y="294.00" width="8.9" height="8.7" fill="#660066"/>
<rect x="651.4" y="302.60" width="8.9" height="8.7" fill="#9900cc"/>
<rect x="651.4" y="311.20" width="8.9" height="8.7" fill="#ff00ff"/>
<rect x="651.4" y="319.80" width="8.9" height="8.7" fill="#ff6600"/>
<rect x="651.4" y="328.40" width="8.9" height="8.7" fill="#ffff00"/>
<rect x="664" y="29.5" width="133.3" height="17.2" fill="#2f546e"/>
<text x="712.91" y="41.00" font-size="6.9" fill="#eef3f7" textLength="35.54" lengthAdjust="spacingAndGlyphs" stroke="#eef3f7" stroke-width="0.15">CREATE JOB</text>
<rect x="664" y="51" width="133.3" height="56.6" fill="#fff"/>
<text x="668.22" y="64.00" font-size="5.2" fill="#777" textLength="28.28" lengthAdjust="spacingAndGlyphs" >Design name</text>
<text x="724.90" y="64.00" font-size="5.2" fill="#888" >W</text>
<text x="759.78" y="64.00" font-size="5.2" fill="#888" >H</text>
<text x="668.09" y="74.00" font-size="7.7" fill="#2d2d2d" textLength="45.63" lengthAdjust="spacingAndGlyphs" stroke="#2d2d2d" stroke-width="0.1">New design 102</text>
<text x="724.55" y="74.00" font-size="7.7" fill="#2d2d2d" textLength="12.35" lengthAdjust="spacingAndGlyphs" stroke="#2d2d2d" stroke-width="0.1">8.27</text>
<text x="759.48" y="74.00" font-size="7.7" fill="#2d2d2d" textLength="15.83" lengthAdjust="spacingAndGlyphs" stroke="#2d2d2d" stroke-width="0.1">11.69</text>
<text x="753.90" y="74.00" font-size="4.8" fill="#555" textLength="4.50" lengthAdjust="spacingAndGlyphs" >in</text>
<text x="789.10" y="74.00" font-size="4.8" fill="#555" textLength="4.50" lengthAdjust="spacingAndGlyphs" >in</text>
<path d="M668.6 78.8H722.4M724.8 78.8H757.8M760 78.8H793" stroke="#cfcfcf" stroke-width="0.9"/>
<text x="668.08" y="89.30" font-size="7" fill="#aaa" textLength="29.53" lengthAdjust="spacingAndGlyphs" >New tag...</text>
<rect x="664" y="112.3" width="133.3" height="50.6" fill="#fff"/>
<rect x="670.20" y="122.80" width="3.5" height="3.3" fill="#2c4d68"/>
<rect x="675.35" y="122.80" width="3.5" height="3.3" fill="#92b1ca"/>
<rect x="680.50" y="122.80" width="3.5" height="3.3" fill="#92b1ca"/>
<rect x="670.20" y="128.00" width="3.5" height="3.3" fill="#92b1ca"/>
<rect x="675.35" y="128.00" width="3.5" height="3.3" fill="#92b1ca"/>
<rect x="680.50" y="128.00" width="3.5" height="3.3" fill="#92b1ca"/>
<rect x="670.20" y="133.20" width="3.5" height="3.3" fill="#92b1ca"/>
<rect x="675.35" y="133.20" width="3.5" height="3.3" fill="#92b1ca"/>
<rect x="680.50" y="133.20" width="3.5" height="3.3" fill="#92b1ca"/>
<text x="687.94" y="124.80" font-size="6" fill="#666" >x</text>
<text x="688.00" y="135.60" font-size="6" fill="#666" >y</text>
<text x="692.79" y="124.90" font-size="6.1" fill="#333" textLength="16.02" lengthAdjust="spacingAndGlyphs" >1.710</text>
<text x="692.98" y="136.90" font-size="6.1" fill="#333" textLength="15.89" lengthAdjust="spacingAndGlyphs" >2.416</text>
<text x="735.68" y="124.80" font-size="6.1" fill="#333" textLength="15.28" lengthAdjust="spacingAndGlyphs" >4.966</text>
<text x="735.55" y="136.90" font-size="6.1" fill="#333" textLength="15.41" lengthAdjust="spacingAndGlyphs" >0.758</text>
<rect x="713.1" y="118.3" width="7.6" height="7.3" fill="#e4e6e9"/><path d="M715.3000000000001 121.2L716.9 120.0L718.5 121.2M715.3000000000001 122.8L716.9 124.0L718.5 122.8" fill="none" stroke="#8c8c8c" stroke-width="0.7"/>
<rect x="713.1" y="130.3" width="7.6" height="7.3" fill="#e4e6e9"/><path d="M715.3000000000001 133.20000000000002L716.9 132.0L718.5 133.20000000000002M715.3000000000001 134.8L716.9 136.0L718.5 134.8" fill="none" stroke="#8c8c8c" stroke-width="0.7"/>
<rect x="755.9" y="118.5" width="7.6" height="7.3" fill="#e4e6e9"/><path d="M758.1 121.4L759.6999999999999 120.2L761.3 121.4M758.1 123.0L759.6999999999999 124.2L761.3 123.0" fill="none" stroke="#8c8c8c" stroke-width="0.7"/>
<rect x="755.9" y="130.75" width="7.6" height="7.3" fill="#e4e6e9"/><path d="M758.1 133.65L759.6999999999999 132.45L761.3 133.65M758.1 135.25L759.6999999999999 136.45L761.3 135.25" fill="none" stroke="#8c8c8c" stroke-width="0.7"/>
<text x="720.98" y="125.00" font-size="4" fill="#999" textLength="3.53" lengthAdjust="spacingAndGlyphs" >in</text>
<text x="763.88" y="125.00" font-size="4" fill="#999" textLength="3.53" lengthAdjust="spacingAndGlyphs" >in</text>
<text x="720.98" y="137.00" font-size="4" fill="#999" textLength="3.53" lengthAdjust="spacingAndGlyphs" >in</text>
<text x="763.88" y="137.00" font-size="4" fill="#999" textLength="3.53" lengthAdjust="spacingAndGlyphs" >in</text>
<path d="M692.9 127.9H724.2M735.8 128.1H766.9M692.9 139.8H724.2M735.8 140.4H766.9" stroke="#d5d5d5" stroke-width="1"/>
<path d="M727.5 120.4V125.4M732.6 120.4V125.4M727.5 122.9H732.6" stroke="#555" stroke-width="0.8"/><path d="M728.8 122.1L727.9 122.9L728.8 123.7M731.3 122.1L732.2 122.9L731.3 123.7" stroke="#555" stroke-width="0.6" fill="none"/>
<path d="M727.8 132.2H732.4M727.8 137.6H732.4M730.1 132.4V137.4" stroke="#555" stroke-width="0.8"/><path d="M729.3 133.6L730.1 132.6L730.9 133.6M729.3 136.2L730.1 137.2L730.9 136.2" stroke="#555" stroke-width="0.6" fill="none"/>
<path d="M769.5 122.5H774.1V136H769.5M774.1 129.2H775.3" fill="none" stroke="#666" stroke-width="0.8"/>
<path d="M780.8 126.4V124.6C780.8 121.9 785 121.9 785 124.6V126.4" fill="none" stroke="#555" stroke-width="0.9"/><rect x="779.5" y="126.4" width="6.8" height="4.8" fill="none" stroke="#555" stroke-width="0.9"/><rect x="782.5" y="128.3" width="0.8" height="1" fill="#555"/>
<path d="M668.6 144.4H792.8" stroke="#e6e6e6" stroke-width="0.8"/>
<path d="M670.7 152.6A3.9 3.9 0 1 1 671.9 157.7" fill="none" stroke="#555" stroke-width="0.9"/><path d="M669.2 154.3H672.3" stroke="#555" stroke-width="0.9"/><circle cx="674.4" cy="154.3" r="0.7" fill="#555"/>
<text x="679.85" y="156.20" font-size="5.6" fill="#aaa" textLength="15.34" lengthAdjust="spacingAndGlyphs" >0.000</text>
<path d="M680 158.6H701" stroke="#ccc" stroke-width="0.9"/>
<path d="M708 151.5L713 154.2L710 157.8L705.8 155.4Z" fill="none" stroke="#333" stroke-width="1"/><path d="M706 155L708.4 152.8L712.6 154.4L710 157.6Z" fill="#333"/><path d="M706 150.4L708 151.5" stroke="#333" stroke-width="0.9"/><circle cx="713.6" cy="157.8" r="0.7" fill="#333"/>
<path d="M719.3 150C720.8 149.5 722.3 150.2 723.5 151.2C724.7 150.2 726.2 149.5 727.8 150C728.4 153.4 727 156.8 723.5 158.2C720 156.8 718.6 153.4 719.3 150Z" fill="#5a5a5a"/>
<path d="M733.4 158H740.8L737.1 151.2Z" fill="none" stroke="#bbb" stroke-width="0.9"/><path d="M737.1 151.4V158" stroke="#bbb" stroke-width="0.7"/><path d="M737.1 152V158H740.5Z" fill="#ccc"/>
<path d="M750.6 150.8V158.2L744 154.5Z" fill="none" stroke="#bbb" stroke-width="0.9"/><path d="M744.4 154.5H750.6" stroke="#bbb" stroke-width="0.7"/><path d="M750.4 154.5V158L744.5 154.5Z" fill="#ccc"/>
<rect x="664" y="168" width="133.3" height="283" fill="#fff"/>
<text x="665.49" y="183.60" font-size="7.2" fill="#555" textLength="19.17" lengthAdjust="spacingAndGlyphs" >Layers</text>
<path d="M726.2 180.2C728.5 177 732.5 177 734.8 180.2C732.5 183.4 728.5 183.4 726.2 180.2Z" fill="none" stroke="#bcbcbc" stroke-width="0.8"/><circle cx="730.5" cy="180.2" r="1.3" fill="none" stroke="#bcbcbc" stroke-width="0.8"/>
<path d="M744.2 176.2L748 178.1L744.2 180L740.4 178.1Z" fill="none" stroke="#333" stroke-width="0.9"/><path d="M740.4 180.4L744.2 182.3L748 180.4M740.4 182.6L744.2 184.5L748 182.6" fill="none" stroke="#333" stroke-width="0.9"/>
<text x="752.49" y="183.00" font-size="6.4" fill="#333" textLength="12.29" lengthAdjust="spacingAndGlyphs" >1 / 1</text>
<path d="M769.8 176.6H776.8L774.2 180V184L772.4 183V180Z" fill="none" stroke="#c4c4c4" stroke-width="0.8"/>
<path d="M783.2 180.2L787.35 176.6L791.5 180.2M783.2 183.6L787.35 180L791.5 183.6" fill="none" stroke="#333" stroke-width="1.1"/>
<path d="M664 195.6H797.3" stroke="#e8e8e8" stroke-width="0.8"/>
<rect x="667.6" y="200.6" width="17.4" height="8.4" fill="#000"/>
<text x="674.59" y="207.50" font-size="6.4" fill="#fff" >1</text>
<text x="752.49" y="207.50" font-size="6.4" fill="#333" textLength="12.29" lengthAdjust="spacingAndGlyphs" >1 / 1</text>
<rect x="771" y="201" width="8" height="7.6" rx="0.5" fill="#2f546e"/><path d="M772.8 204.8L774.5 206.5L777.3 203" fill="none" stroke="#fff" stroke-width="1"/>
<path d="M786.6 206.4L790.8 202.2L795 206.4" fill="none" stroke="#333" stroke-width="1.1"/>
<rect x="664" y="213" width="133.3" height="17.4" fill="#d2d2d2"/>
<path d="M669.6 226.2L672.9 218.6L676.2 226.2" fill="none" stroke="#222" stroke-width="1.6"/><path d="M671.6 223.9H674.2" stroke="#222" stroke-width="1.3"/>
<text x="679.45" y="224.90" font-size="6.6" fill="#333" textLength="33.83" lengthAdjust="spacingAndGlyphs" stroke="#333" stroke-width="0.12">Maker Hub</text>
</svg></body></html>
